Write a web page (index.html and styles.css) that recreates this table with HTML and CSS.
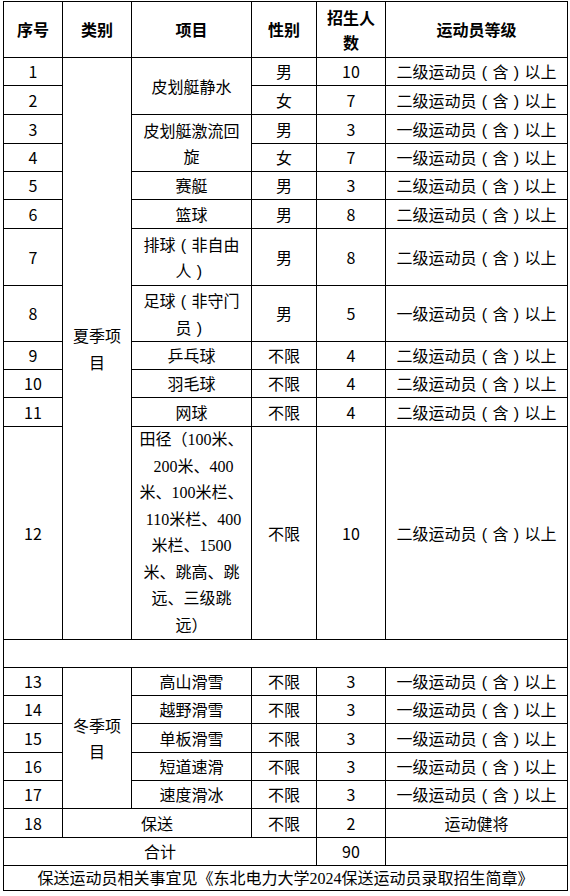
FILE: index.html
```html
<!DOCTYPE html>
<html lang="zh-CN">
<head>
<meta charset="utf-8">
<link rel="stylesheet" href="styles.css">
</head>
<body>
<table class="tbl">
  <colgroup>
    <col class="c1"><col class="c2"><col class="c3"><col class="c4"><col class="c5"><col class="c6">
  </colgroup>
  <tr class="head">
    <th>序号</th><th>类别</th><th>项目</th><th>性别</th><th>招生人<br>数</th><th>运动员等级</th>
  </tr>
  <tr class="r"><td>1</td><td rowspan="12">夏季项<br>目</td><td rowspan="2">皮划艇静水</td><td>男</td><td>10</td><td>二级运动员<span class="p">(</span>含<span class="p">)</span>以上</td></tr>
  <tr class="r t"><td>2</td><td>女</td><td>7</td><td>二级运动员<span class="p">(</span>含<span class="p">)</span>以上</td></tr>
  <tr class="r t"><td>3</td><td rowspan="2">皮划艇激流回<br>旋</td><td>男</td><td>3</td><td>一级运动员<span class="p">(</span>含<span class="p">)</span>以上</td></tr>
  <tr class="r"><td>4</td><td>女</td><td>7</td><td>一级运动员<span class="p">(</span>含<span class="p">)</span>以上</td></tr>
  <tr class="r"><td>5</td><td>赛艇</td><td>男</td><td>3</td><td>二级运动员<span class="p">(</span>含<span class="p">)</span>以上</td></tr>
  <tr class="r t"><td>6</td><td>篮球</td><td>男</td><td>8</td><td>二级运动员<span class="p">(</span>含<span class="p">)</span>以上</td></tr>
  <tr class="r2 t"><td>7</td><td>排球<span class="p">(</span>非自由<br>人<span class="p">)</span></td><td>男</td><td>8</td><td>二级运动员<span class="p">(</span>含<span class="p">)</span>以上</td></tr>
  <tr class="r2"><td>8</td><td>足球<span class="p">(</span>非守门<br>员<span class="p">)</span></td><td>男</td><td>5</td><td>一级运动员<span class="p">(</span>含<span class="p">)</span>以上</td></tr>
  <tr class="r"><td>9</td><td>乒乓球</td><td>不限</td><td>4</td><td>二级运动员<span class="p">(</span>含<span class="p">)</span>以上</td></tr>
  <tr class="r"><td>10</td><td>羽毛球</td><td>不限</td><td>4</td><td>二级运动员<span class="p">(</span>含<span class="p">)</span>以上</td></tr>
  <tr class="r t"><td>11</td><td>网球</td><td>不限</td><td>4</td><td>二级运动员<span class="p">(</span>含<span class="p">)</span>以上</td></tr>
  <tr class="r8"><td>12</td><td class="mix">田径（100米、<br>&nbsp;200米、400<br>米、100米栏、<br>&nbsp;110米栏、400<br>米栏、1500<br>米、跳高、跳<br>远、三级跳<br>远）</td><td>不限</td><td>10</td><td>二级运动员<span class="p">(</span>含<span class="p">)</span>以上</td></tr>
  <tr class="r"><td colspan="6"></td></tr>
  <tr class="r"><td>13</td><td rowspan="5">冬季项<br>目</td><td>高山滑雪</td><td>不限</td><td>3</td><td>一级运动员<span class="p">(</span>含<span class="p">)</span>以上</td></tr>
  <tr class="r"><td>14</td><td>越野滑雪</td><td>不限</td><td>3</td><td>一级运动员<span class="p">(</span>含<span class="p">)</span>以上</td></tr>
  <tr class="r t"><td>15</td><td>单板滑雪</td><td>不限</td><td>3</td><td>一级运动员<span class="p">(</span>含<span class="p">)</span>以上</td></tr>
  <tr class="r"><td>16</td><td>短道速滑</td><td>不限</td><td>3</td><td>一级运动员<span class="p">(</span>含<span class="p">)</span>以上</td></tr>
  <tr class="r"><td>17</td><td>速度滑冰</td><td>不限</td><td>3</td><td>一级运动员<span class="p">(</span>含<span class="p">)</span>以上</td></tr>
  <tr class="r t"><td>18</td><td colspan="2">保送</td><td>不限</td><td>2</td><td>运动健将</td></tr>
  <tr class="r"><td colspan="4">合计</td><td>90</td><td></td></tr>
  <tr class="foot"><td colspan="6" class="mix">保送运动员相关事宜见《东北电力大学2024保送运动员录取招生简章》</td></tr>
</table>
</body>
</html>
```

FILE: styles.css
```css
html, body {
  margin: 0;
  padding: 0;
  background: #fff;
}
.tbl {
  margin: 1px 0 0 3px;
  border-collapse: collapse;
  table-layout: fixed;
  width: 565px;
  font-family: "Noto Sans CJK SC", "Noto Sans", sans-serif;
  font-size: 16px;
  color: #000;
}
.c1 { width: 59px; }
.c2 { width: 69px; }
.c3 { width: 120px; }
.c4 { width: 65px; }
.c5 { width: 69px; }
.c6 { width: 182px; }
.tbl th, .tbl td {
  border: 1px solid #000;
  padding: 0;
  text-align: center;
  vertical-align: middle;
  line-height: 26.5px;
  white-space: nowrap;
  overflow: hidden;
}
.tbl th {
  font-weight: bold;
  line-height: 25px;
}
.p {
  display: inline-block;
  width: 1em;
  line-height: 1;
  text-align: center;
  font-family: "Liberation Sans", sans-serif;
}
.head { height: 56px; }
.r { height: 28px; }
.r.t { height: 29px; }
.r2 { height: 56px; }
.r2.t { height: 57px; }
.r8 { height: 213px; }
.foot { height: 25px; }
.mix {
  font-family: "Liberation Serif", "Noto Sans CJK SC", serif;
}
.foot td {
  line-height: 23px;
}
```
